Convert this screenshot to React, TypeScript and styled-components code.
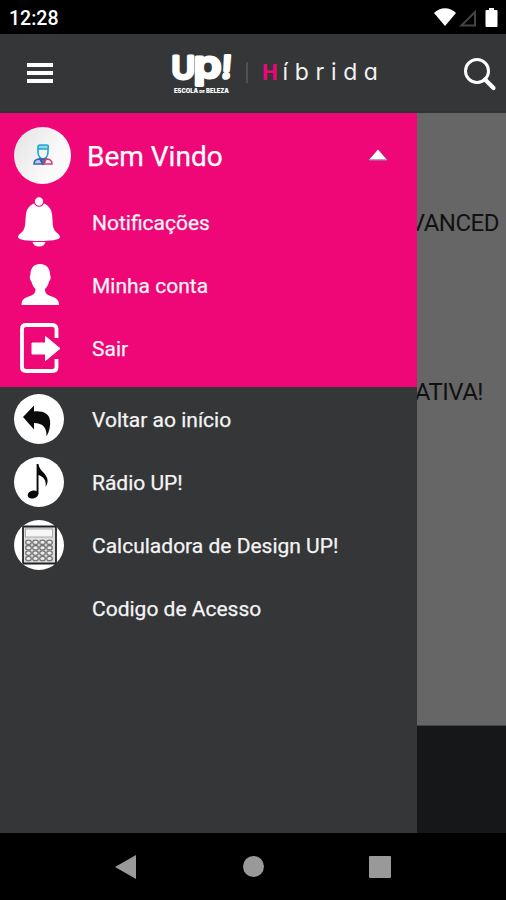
import React from "react";
import styled, { createGlobalStyle } from "styled-components";

const GlobalStyle = createGlobalStyle`
  * { box-sizing: border-box; }
  body { margin: 0; background: #000; font-family: Roboto, "Liberation Sans", sans-serif; }
`;

const Screen = styled.div`
  width: 506px;
  height: 900px;
  display: flex;
  flex-direction: column;
  overflow: hidden;
  background: #000;
`;

const StatusBar = styled.header`
  height: 34px;
  flex: none;
  display: flex;
  align-items: center;
  justify-content: space-between;
  padding: 3px 7px 0 9px;
  color: #fff;
`;

const Clock = styled.span`
  font-size: 19.5px;
  line-height: 22px;
  font-weight: 500;
`;

const AppBar = styled.div`
  height: 79px;
  flex: none;
  display: flex;
  align-items: center;
  padding: 0 10px 0 26px;
  background: #353638;
  border-bottom: 2px solid #2d3436;
`;

const IconButton = styled.button`
  display: flex;
  padding: 0;
  border: 0;
  background: none;
`;

const Brand = styled.div`
  flex: 1;
  display: flex;
  align-items: center;
  padding-left: 118px;
`;

const Divider = styled.i`
  width: 2px;
  height: 21px;
  margin: 0 14px 0 14px;
  background: #505153;
`;

const Product = styled.span`
  color: #f2f2f2;
  font: 400 23px/28px Inter, sans-serif;
  font-feature-settings: "cv11";
  letter-spacing: 6.6px;
  white-space: nowrap;
`;

const Initial = styled.b`
  color: #ed0677;
  font: 700 22px/28px Roboto, sans-serif;
  letter-spacing: 5px;
`;

const Body = styled.main`
  flex: 1;
  display: flex;
  min-height: 0;
`;

const Drawer = styled.nav`
  width: 417px;
  flex: none;
  background: #353638;
`;

const Account = styled.section`
  height: 274px;
  background: #ef0677;
`;

const Welcome = styled.div`
  height: 77px;
  display: flex;
  align-items: center;
  padding: 7px 29px 0 14px;
  color: #fff;
  font-size: 28px;
`;

const Avatar = styled.span`
  width: 57px;
  height: 57px;
  margin-right: 16px;
  display: flex;
  align-items: center;
  justify-content: center;
  border-radius: 50%;
  background: linear-gradient(120deg, #e2e2e2, #fafafa 65%);
`;

const WelcomeText = styled.span`
  flex: 1;
  line-height: 34px;
  padding-top: 3px;
  -webkit-text-stroke: 0.25px currentColor;
`;

const Links = styled.div`
  padding-top: 0.2px;
`;

const Row = styled.a`
  height: 63.2px;
  display: flex;
  align-items: center;
  padding-left: 14px;
  color: #f4f4f4;
  font-size: 21px;
  line-height: 28px;
`;

const IconSlot = styled.span`
  width: 50px;
  height: 50px;
  margin-right: 28px;
  flex: none;
`;

const Label = styled.span`
  padding-top: 2px;
  white-space: nowrap;
  -webkit-text-stroke: 0.25px currentColor;
`;

const Page = styled.div`
  flex: 1;
  min-width: 0;
  display: flex;
  flex-direction: column;
`;

const Backdrop = styled.div`
  height: 613px;
  background: #666;
  border-bottom: 1px solid #444;
  overflow: hidden;
`;

const Heading = styled.div<{ $top: number; $right: number }>`
  display: flex;
  justify-content: flex-end;
  margin-top: ${(p) => p.$top}px;
  padding-right: ${(p) => p.$right}px;
  color: #111;
  font-size: 24px;
  line-height: 30px;
  letter-spacing: -0.5px;
  white-space: nowrap;
`;

const Footer = styled.div`
  flex: 1;
  background: #151719;
`;

const SystemNav = styled.footer`
  height: 67px;
  flex: none;
  display: flex;
  justify-content: space-between;
  align-items: center;
  padding: 0 115px;
`;

const Svg = styled.svg`
  display: block;
  overflow: visible;
`;

const PLetter = styled.tspan`
  text-transform: lowercase;
`;

const Logo = () => (
  <Svg width="60" height="44" viewBox="0 0 60 44" fill="#fff" fontFamily="Inter, sans-serif" fontWeight="600">
    <g stroke="#fff" strokeWidth="3" strokeLinejoin="round">
      <text x="-0.500" y="27.500" fontSize="31" textLength="23.500" lengthAdjust="spacingAndGlyphs">U</text>
      <text x="21.500" y="26.500" fontSize="38" textLength="28" lengthAdjust="spacingAndGlyphs"><PLetter>P</PLetter></text>
      <text x="51" y="27" fontSize="31" transform="skewX(-4)">!</text>
    </g>
    <text x="2" y="41.500" fontSize="5.700" fontWeight="900" textLength="55" lengthAdjust="spacingAndGlyphs">
      ESCOLA <tspan fontSize="4">DE</tspan> BELEZA
    </text>
  </Svg>
);

const BellIcon = () => (
  <Svg width="50" height="50" viewBox="0 0 50 50">
    <path fill="#fff" d="M25 5C18 6 13 10 12 17c-1 8 0 14-4 18-2 2-4 3-4 5 0 3 10 4 21 4s21-1 21-4c0-2-2-3-4-5-4-4-3-10-4-18C37 10 32 6 25 5Z" />
    <path fill="#fff" d="M18.500 45h13c-1 3-3 4.500-6.500 4.500S19.500 48 18.500 45Z" />
    <circle cx="25" cy="4.500" r="4.700" fill="#fff" stroke="#f00679" strokeWidth="1.100" />
  </Svg>
);

const PersonIcon = () => (
  <Svg width="50" height="50" viewBox="0 0 50 50">
    <path fill="#fff" d="M26 4c6 0 10 4 10 10 0 1 .7 1.500.7 3.500 0 2-1 3-1.600 4-.8 3.500-2.100 5.500-4.100 7.500 0 4 1.500 5.500 5.500 7 5 1.700 8.500 3 8.500 9H7.500c0-6 3.500-7.300 8.500-9 4-1.500 5.500-3 5.500-7-2-2-3.300-4-4.100-7.500-.6-1-1.600-2-1.600-4 0-2 .7-2.500.7-3.500C16.500 8 20 4 26 4Z" />
  </Svg>
);

const ExitIcon = () => (
  <Svg width="50" height="50" viewBox="0 0 50 50" fill="none">
    <path d="M42.500 15V6q0-4-4-4H12Q8 2 8 6v38q0 4 4 4h26.500q4 0 4-4v-8" stroke="#fff" strokeWidth="3.800" />
    <path fill="#fff" stroke="#fff" strokeLinejoin="round" d="M31.500 13.500 46 25.500 31.500 37.500V31H18V20h13.500Z" />
  </Svg>
);

const BackIcon = () => (
  <Svg width="50" height="50" viewBox="0 0 50 50">
    <circle cx="25" cy="25" r="25" fill="#fff" />
    <path fill="#0b0b0b" d="M9 23 20 11.500v6c9-.8 15 2 16 9 .7 5-.5 10.500-3.500 16C33 34 29 29 20 29v6.500Z" />
  </Svg>
);

const NoteIcon = () => (
  <Svg width="50" height="50" viewBox="0 0 50 50">
    <circle cx="25" cy="25" r="25" fill="#fff" />
    <ellipse cx="19" cy="37.500" rx="5.400" ry="4" fill="#090909" transform="rotate(-15 19 37.500)" />
    <path fill="#090909" d="M22.600 7h1.900c.5 5 4 7 6.600 10.500 3.300 4.500 3.300 8 .5 12.500 1-7-2-10-7.100-12v19h-1.900Z" />
  </Svg>
);

const CalculatorIcon = () => (
  <Svg width="50" height="50" viewBox="0 0 50 50">
    <circle cx="25" cy="25" r="25" fill="#fff" />
    <rect x="9" y="6.500" width="33" height="37" rx="1" fill="#dedede" stroke="#222" strokeWidth="1.800" />
    <rect x="11.500" y="9" width="27" height="8" fill="#f6f6f6" stroke="#999" strokeWidth=".8" />
    <g fill="#ececec" stroke="#777" strokeWidth="1.300">
      {[22.3, 27.7, 33.1, 38.5].map((y) =>
        [14.5, 21.5, 28.5, 35.5].map((x) => <ellipse key={`${x}-${y}`} cx={x} cy={y} rx="2.800" ry="2.200" />)
      )}
    </g>
  </Svg>
);

const accountLinks = [
  { label: "Notificações", Icon: BellIcon },
  { label: "Minha conta", Icon: PersonIcon },
  { label: "Sair", Icon: ExitIcon },
];

const menuLinks = [
  { label: "Voltar ao início", Icon: BackIcon },
  { label: "Rádio UP!", Icon: NoteIcon },
  { label: "Calculadora de Design UP!", Icon: CalculatorIcon },
  { label: "Codigo de Acesso", Icon: null },
];

const MenuRow = ({ label, Icon }: { label: string; Icon: React.ComponentType | null }) => (
  <Row>
    <IconSlot>{Icon && <Icon />}</IconSlot>
    <Label>{label}</Label>
  </Row>
);

export default function App() {
  return (
    <Screen>
      <GlobalStyle />
      <StatusBar>
        <Clock>12:28</Clock>
        <Svg width="65" height="22" viewBox="0 0 65 22">
          <path fill="#fff" d="M0 5C6-1.500 16-1.500 22 5L11 18Z" />
          <path fill="none" stroke="#444" strokeWidth="2" d="M41 4v13.500H27.500Z" />
          <path fill="#fff" d="M55 0h5v2h2.500q1 0 1 1v15q0 1-1 1h-10q-1 0-1-1V3q0-1 1-1H55Z" />
        </Svg>
      </StatusBar>
      <AppBar>
        <IconButton aria-label="Menu">
          <Svg width="28" height="20" viewBox="0 0 28 20" fill="#fff">
            <path d="M1 0h26v4H1zM1 8h26v4H1zM1 16h26v4H1z" />
          </Svg>
        </IconButton>
        <Brand>
          <Logo />
          <Divider />
          <Product><Initial>H</Initial>íbrida</Product>
        </Brand>
        <IconButton aria-label="Buscar">
          <Svg width="32" height="32" viewBox="0 0 32 32" fill="none" stroke="#fff">
            <circle cx="13" cy="14" r="11.500" strokeWidth="3" />
            <path d="m21 22.500 8.500 8.500" strokeWidth="4.200" strokeLinecap="round" />
          </Svg>
        </IconButton>
      </AppBar>
      <Body>
        <Drawer>
          <Account>
            <Welcome>
              <Avatar>
                <Svg width="20" height="22" viewBox="0 0 20 22" fill="none" strokeWidth="1.600">
                  <path fill="#8ad8ea" stroke="#23a6cf" d="M5 5V3q0-2 2-2h7q2 0 1 4Z" />
                  <path stroke="#23a6cf" d="M5 5v3c0 5 3 7 5 7s5-2 5-7V5" />
                  <path fill="#b9cdea" stroke="#3465b0" d="M7 15c-4 0-6 2-6 5h9Z" />
                  <path fill="#4b78c5" stroke="#445ca5" d="m7 15 3 5 3-5Z" />
                  <path stroke="#dd3c68" d="M13 15c4 0 6 2 6 5h-8Z" />
                </Svg>
              </Avatar>
              <WelcomeText>Bem Vindo</WelcomeText>
              <Svg width="20" height="12" viewBox="0 0 20 12">
                <path fill="#fff" stroke="#b80a69" strokeWidth=".7" d="M10 0 19.500 11H.5Z" />
                <path stroke="#aa9bc0" strokeWidth="1.300" d="M1 10.800h18" />
              </Svg>
            </Welcome>
            <Links>{accountLinks.map((l) => <MenuRow key={l.label} {...l} />)}</Links>
          </Account>
          <Links>{menuLinks.map((l) => <MenuRow key={l.label} {...l} />)}</Links>
        </Drawer>
        <Page>
          <Backdrop>
            <Heading $top={95} $right={7}>ADVANCED</Heading>
            <Heading $top={139} $right={23}>CRIATIVA!</Heading>
          </Backdrop>
          <Footer />
        </Page>
      </Body>
      <SystemNav>
        <Svg width="21" height="24" viewBox="0 0 21 24"><path fill="#999" d="M0 12 21 0v24Z" /></Svg>
        <Svg width="21" height="21" viewBox="0 0 21 21"><circle cx="11.500" cy="10.500" r="10.500" fill="#999" /></Svg>
        <Svg width="22" height="22" viewBox="0 0 22 22"><rect width="22" height="22" rx="1" fill="#999" /></Svg>
      </SystemNav>
    </Screen>
  );
}
